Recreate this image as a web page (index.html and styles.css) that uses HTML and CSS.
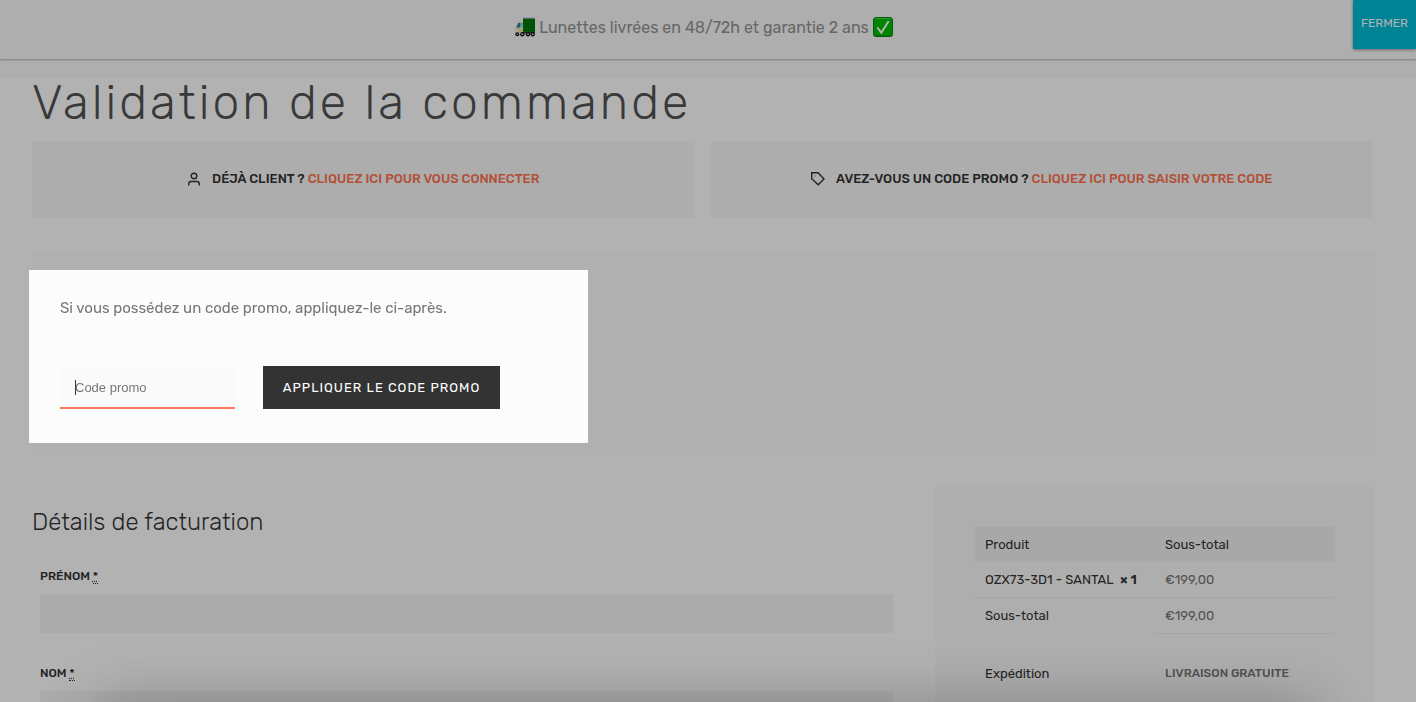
FILE: index.html
```html
<!DOCTYPE html>
<html lang="fr">
<head>
  <meta charset="UTF-8">
  <meta name="viewport" content="width=device-width, initial-scale=1">
  <title>Validation de la commande</title>
  <link rel="stylesheet" href="styles.css">
</head>
<body>
  <header class="topbar">
    <p class="topbar-text">
      <svg class="emoji" viewBox="0 0 20 20" aria-hidden="true">
        <path d="M8 1h12v15H8z" fill="#00820f"/>
        <path d="M8 .5h12v1H8z" fill="#d5b8ea"/>
        <path d="M8 4h12M8 7h12M8 10h12M8 13h12" stroke="#005c0a" stroke-width=".8"/>
        <path d="M.3 16v-5L3 5h5v11z" fill="#f0dfb4"/>
        <path d="M1.300 10.500L3.300 6H5v4.500z" fill="#1f7fae"/>
        <path d="M5.300 6h1.900v4H5.300z" fill="#62c4e2"/>
        <path d="M0 13.500h3v1H0z" fill="#fff"/>
        <path d="M7 15h13v1.500H7z" fill="#3b3b3b"/>
        <g fill="#151515"><circle cx="2.300" cy="17.200" r="2"/><circle cx="7.300" cy="17.200" r="2.200"/><circle cx="13" cy="17.200" r="2.200"/><circle cx="17.700" cy="17.200" r="2.200"/></g>
        <g fill="#d0d0d0"><circle cx="2.300" cy="17.200" r=".8"/><circle cx="7.300" cy="17.200" r=".9"/><circle cx="13" cy="17.200" r=".9"/><circle cx="17.700" cy="17.200" r=".9"/></g>
      </svg>
      <span>Lunettes livrées en 48/72h et garantie 2 ans</span>
      <svg class="emoji" viewBox="0 0 20 20" aria-hidden="true">
        <rect width="20" height="20" rx="3.500" fill="#007d12"/>
        <rect x=".8" y=".8" width="18.400" height="18" rx="3" fill="#00bd00"/>
        <path d="M2 1.500h16" stroke="#5fd45f" stroke-width=".8"/>
        <path d="M4.300 10.500l4 5.200L15.700 4" fill="none" stroke="#fff" stroke-width="2"/>
      </svg>
    </p>
    <button class="close-button" type="button">FERMER</button>
  </header>

  <main class="page">
    <h1 class="page-title">Validation de la commande</h1>

    <div class="notices">
      <p class="notice">
        <svg class="notice-icon" viewBox="0 0 16 16" aria-hidden="true"><circle cx="8" cy="5" r="2.800"/><path d="M2.700 14.500v-1.500a2.500 2.500 0 0 1 2.500-2.500h5.600a2.500 2.500 0 0 1 2.500 2.500v1.500"/></svg>
        <span>DÉJÀ CLIENT ? <a href="#">CLIQUEZ ICI POUR VOUS CONNECTER</a></span>
      </p>
      <p class="notice">
        <svg class="notice-icon" viewBox="0 0 16 16" aria-hidden="true"><path d="M1.700 1.700h6.300l6 6.200-5.800 5.900-6.500-6z"/><path d="M4.800 5h.5"/></svg>
        <span>AVEZ-VOUS UN CODE PROMO ? <a href="#">CLIQUEZ ICI POUR SAISIR VOTRE CODE</a></span>
      </p>
    </div>

    <section class="coupon">
      <form class="coupon-form">
        <p class="coupon-text">Si vous possédez un code promo, appliquez-le ci-après.</p>
        <div class="coupon-row">
          <input class="coupon-input" type="text" placeholder="Code promo" aria-label="Code promo">
          <button class="coupon-button" type="submit">APPLIQUER LE CODE PROMO</button>
        </div>
      </form>
    </section>

    <div class="checkout">
      <form class="billing">
        <h2 class="billing-title">Détails de facturation</h2>
        <div class="field">
          <label for="prenom">PRÉNOM <abbr title="obligatoire">*</abbr></label>
          <input type="text" id="prenom">
        </div>
        <div class="field">
          <label for="nom">NOM <abbr title="obligatoire">*</abbr></label>
          <input type="text" id="nom">
        </div>
      </form>

      <aside class="order">
        <table class="order-table">
          <thead>
            <tr><th>Produit</th><th>Sous-total</th></tr>
          </thead>
          <tbody>
            <tr class="item"><td>OZX73-3D1 - SANTAL&nbsp; <strong>× 1</strong></td><td>€199,00</td></tr>
          </tbody>
          <tfoot>
            <tr class="subtotal"><th>Sous-total</th><td>€199,00</td></tr>
            <tr class="shipping"><th>Expédition</th><td>LIVRAISON GRATUITE</td></tr>
          </tfoot>
        </table>
      </aside>
    </div>
  </main>

  <div class="bottom-sheet"></div>
</body>
</html>
```
FILE: styles.css
```css
* {
  box-sizing: border-box;
}

body {
  margin: 0;
  height: 100vh;
  overflow: hidden;
  background: #fff;
  color: #333;
  font-family: Rubik, Roboto, sans-serif;
  font-size: 13px;
}

h1, h2, p {
  margin: 0;
}

/* Header */
.topbar {
  position: relative;
  height: 59px;
  padding: 0 8px 5px 0;
  display: flex;
  align-items: center;
  justify-content: center;
  background: #fafafa;
  box-shadow: 0 1px 2px rgba(0, 0, 0, 0.3);
}

.topbar-text {
  display: flex;
  align-items: center;
  gap: 4px;
  font-size: 16px;
  color: #929292;
}

.emoji {
  width: 20px;
  height: 20px;
}

.close-button {
  position: absolute;
  top: 0;
  right: 0;
  width: 63px;
  height: 49px;
  padding: 0 0 4px;
  border: none;
  background: #00bcd4;
  color: #fff;
  font: 12px Rubik, Roboto, sans-serif;
  box-shadow: 0 1px 3px rgba(0, 0, 0, 0.4);
}

/* Page */
.page {
  border-top: 19px solid #fafafa;
  padding: 0 41px 0 32px;
}

.page-title {
  font-size: 48px;
  font-weight: 300;
  line-height: 50px;
  padding-bottom: 13px;
  letter-spacing: 3px;
  color: #525252;
}

.notices {
  display: grid;
  grid-template-columns: 1fr 1fr;
  gap: 17px;
  padding-right: 3px;
}

.notice {
  height: 77px;
  padding-bottom: 2px;
  display: flex;
  align-items: center;
  justify-content: center;
  gap: 10px;
  background: #f8f8f8;
  font-weight: 500;
}

.notice a {
  color: #ff7350;
  text-decoration: none;
}

.notice-icon {
  width: 16px;
  height: 16px;
  fill: none;
  stroke: #333;
  stroke-width: 1.4;
}

/* Coupon, everything around the form is dimmed */
.coupon {
  margin-top: 34px;
  padding: 18px 0 12px;
  background: #fcfcfc;
}

.coupon-form {
  position: relative;
  z-index: 10;
  width: 559px;
  max-width: 100%;
  margin-left: -3px;
  padding: 28px 31px 34px;
  background: #fcfcfc;
  box-shadow: 0 0 0 9999px rgba(0, 0, 0, 0.3);
}

.coupon-text {
  padding-bottom: 48px;
  font-size: 15px;
  line-height: 20px;
  color: #777;
}

.coupon-row {
  display: flex;
  gap: 28px;
}

/* the gradient is the text cursor */
.coupon-input {
  width: 175px;
  height: 43px;
  padding: 2px 15px 0;
  border: none;
  border-bottom: 2px solid #ff7a5c;
  background: linear-gradient(#333, #333) 15px 14px / 1px 15px no-repeat #fafafa;
  font: 13px "Liberation Sans", Arial, sans-serif;
  outline: none;
}

.coupon-input::placeholder {
  color: #777;
}

.coupon-button {
  width: 237px;
  border: none;
  background: #333;
  color: #fff;
  font: 13px Rubik, Roboto, sans-serif;
  letter-spacing: 1px;
}

/* Checkout */
.checkout {
  display: grid;
  grid-template-columns: 1fr 440px;
  gap: 42px;
  margin-top: 32px;
}

.billing-title {
  padding: 20px 0 32px;
  font-size: 24px;
  font-weight: 300;
  line-height: 30px;
}

.field {
  padding: 0 0 33px 8px;
}

.field label {
  display: block;
  padding-bottom: 10px;
  font-size: 12px;
  font-weight: 500;
  line-height: 15px;
}

.field abbr {
  border-bottom: 1px dotted #333;
}

.field input {
  display: block;
  width: 100%;
  height: 39px;
  border: none;
  background: #f5f5f5;
}

.order {
  padding: 40px;
  background: #fafafa;
}

.order-table {
  width: 100%;
  table-layout: fixed;
  border-collapse: collapse;
}

.order-table th,
.order-table td {
  height: 36px;
  padding: 0 10px;
  text-align: left;
  font-weight: 400;
}

.order-table thead th {
  height: 35px;
  background: #f1f1f1;
}

.order-table .item td {
  height: 35px;
}

.order-table td + td,
.order-table th + td {
  color: #777;
}

.item strong {
  font-weight: 600;
}

.item td,
.subtotal td {
  border-bottom: 1px solid #ededed;
}

.order-table .shipping th,
.order-table .shipping td {
  height: 80px;
}

.order-table .shipping td {
  font-size: 12px;
  font-weight: 500;
}

/* Closed sheet waiting under the window, only its shadow shows */
.bottom-sheet {
  position: fixed;
  left: 100px;
  right: 100px;
  top: 100%;
  height: 60px;
  box-shadow: 0 0 60px rgba(0, 0, 0, 0.25);
}
```
